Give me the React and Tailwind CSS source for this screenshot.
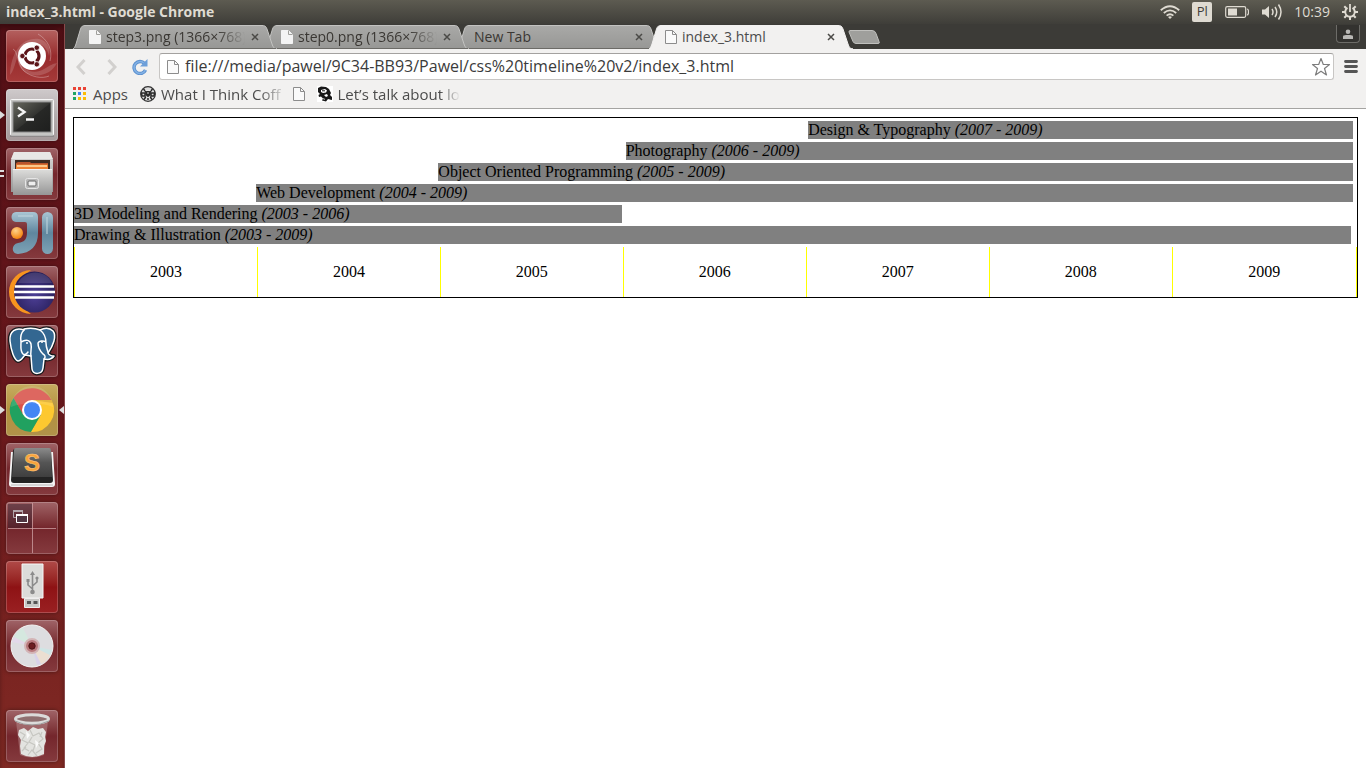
import React from "react";

const LAUNCHER = [
  { name: "Dash", tone: "red", Art: DashArt },
  { name: "Terminal", tone: "light", Art: TerminalArt, left: "arrow" },
  { name: "Files", tone: "wine", Art: FilesArt, left: "bars" },
  { name: "IntelliJ IDEA", tone: "wine", Art: IdeaArt },
  { name: "Eclipse", tone: "wine", Art: EclipseArt },
  { name: "pgAdmin", tone: "wine", Art: ElephantArt },
  { name: "Google Chrome", tone: "gold", Art: ChromeArt, left: "arrow", right: true },
  { name: "Sublime Text", tone: "wine", Art: SublimeArt },
  { name: "Workspace Switcher", tone: "wine", Art: WorkspaceArt },
  { name: "USB drive", tone: "bright", Art: UsbArt },
  { name: "Disc", tone: "wine", Art: DiscArt },
];

const TONES = {
  red: "from-[#b4605f] via-[#972b2d] to-[#a63a39]",
  light: "from-[#cfcacb] via-[#b3adae] to-[#a59a9b]",
  wine: "from-[#a06468] via-[#74262c] to-[#853a3e]",
  gold: "from-[#c6ac60] via-[#b4923f] to-[#b0924a]",
  bright: "from-[#b04a48] via-[#8e1214] to-[#9a2022]",
};

const BARS = [
  { title: "Design & Typography", span: "(2007 - 2009)", place: "ml-[57.22%] mr-1" },
  { title: "Photography", span: "(2006 - 2009)", place: "ml-[43%] mr-1" },
  { title: "Object Oriented Programming", span: "(2005 - 2009)", place: "ml-[28.4%] mr-1" },
  { title: "Web Development", span: "(2004 - 2009)", place: "ml-[14.2%] mr-1" },
  { title: "3D Modeling and Rendering", span: "(2003 - 2006)", place: "mr-[57.3%]" },
  { title: "Drawing & Illustration", span: "(2003 - 2009)", place: "mr-1.5" },
];

const YEARS = ["2003", "2004", "2005", "2006", "2007", "2008", "2009"];

function Svg({ children, className = "size-full", box = "0 0 52 52" }) {
  return (
    <svg viewBox={box} className={className} fill="none" aria-hidden="true">
      {children}
    </svg>
  );
}

function DashArt() {
  return (
    <Svg>
      <path d="M4 45C5 22 16 7 33 9c9 2 12 10 10 17C41 14 27 8 17 18 9 26 10 38 4 45z" fill="#fff" opacity=".16" />
      <path d="M51 33C45 45 30 49 19 42c-6-4-8-10-7-16 2 13 15 20 26 13 7-4 8-5 13-6z" fill="#fff" opacity=".16" />
      <path d="M7 19c5 2 4 15 11 22 7 6 18 8 25 5M32 4c10 6 15 16 12 27" stroke="#fff" opacity=".3" />
      <circle cx="26" cy="26" r="14" fill="#fff" />
      <circle cx="26" cy="26" r="7" stroke="#5c1418" strokeWidth="3.2" strokeDasharray="12.66 2" strokeDashoffset="6.33" />
      <g fill="#5c1418" stroke="#fff" strokeWidth=".8">
        <circle cx="16.4" cy="26" r="2.700" />
        <circle cx="30.8" cy="17.7" r="2.700" />
        <circle cx="30.8" cy="34.3" r="2.700" />
      </g>
    </Svg>
  );
}

function TerminalArt() {
  return (
    <Svg>
      <defs>
        <linearGradient id="term" x1="0" y1="0" x2="1" y2="1">
          <stop stopColor="#68695f" />
          <stop offset=".5" stopColor="#333431" />
          <stop offset=".52" stopColor="#272826" />
          <stop offset="1" stopColor="#1e1f1e" />
        </linearGradient>
      </defs>
      <rect x="4.5" y="10.5" width="43" height="36" rx="1" fill="#c5c5c3" stroke="#f6f6f6" />
      <path d="M4 47h44" stroke="#777" />
      <rect x="7" y="13" width="38" height="30" fill="url(#term)" stroke="#888" />
      <path d="M12 18.500l6.500 4.500-6.500 4.500M20 30.500h8" stroke="#f5f5f5" strokeWidth="2.400" />
    </Svg>
  );
}

function FilesArt() {
  return (
    <Svg>
      <defs>
        <linearGradient id="cab" x1="0" y1="0" x2="0" y2="1">
          <stop stopColor="#dededc" />
          <stop offset="1" stopColor="#969696" />
        </linearGradient>
      </defs>
      <path d="M8 4h36l3 8v32H5V12z" fill="url(#cab)" />
      <path d="M8 4h36l3 7H5z" fill="#e8e8e6" />
      <path d="M9 12h35v10H9z" fill="#3c2b22" />
      <path d="M12 14h12l1 1h17v7H10v-7z" fill="#b9542b" />
      <path d="M10 16.500h32v5H10z" fill="#ee8335" />
      <path d="M11 18h30" stroke="#ffe0a8" strokeWidth="1.4" />
      <path d="M7 21h39v26H7z" fill="url(#cab)" />
      <path d="M7 21.5h39" stroke="#f2f2f2" />
      <rect x="19.5" y="30.5" width="13" height="10" rx="2" fill="#b6b6b6" stroke="#e6e6e6" />
      <rect x="22" y="33" width="8" height="5" rx="1" fill="#eee" stroke="#666" />
    </Svg>
  );
}

function IdeaArt() {
  return (
    <Svg>
      <defs>
        <linearGradient id="steel" x1="0" y1="0" x2="0" y2="1">
          <stop stopColor="#a9c6d4" />
          <stop offset=".5" stopColor="#5f869e" />
          <stop offset="1" stopColor="#7ea3b6" />
        </linearGradient>
        <radialGradient id="ball" cx=".4" cy=".3" r=".7">
          <stop stopColor="#ffd28a" />
          <stop offset="1" stopColor="#f5830e" />
        </radialGradient>
      </defs>
      <path d="M10 5h17q5 0 5 5v16c0 13-7 20-20 21-7 0-7-10 0-11 7-1 9-4 9-11v-8q0-2-2-2h-9c-6 0-6-10 0-10z" fill="url(#steel)" />
      <rect x="36" y="5" width="11" height="42" rx="5.5" fill="url(#steel)" />
      <path d="M12 9h15M41 10v17" stroke="#c2d7df" opacity=".5" strokeWidth="2" />
      <circle cx="11" cy="26" r="6" fill="url(#ball)" />
    </Svg>
  );
}

function EclipseArt() {
  return (
    <Svg>
      <defs>
        <radialGradient id="moon" cx=".5" cy=".6" r=".6">
          <stop stopColor="#4d3f96" />
          <stop offset="1" stopColor="#251d57" />
        </radialGradient>
      </defs>
      <path d="M25 4a22 22 0 0 0 0 44A27 27 0 0 1 25 4z" fill="#f7941e" />
      <circle cx="28.5" cy="26" r="20.5" fill="url(#moon)" />
      <path d="M9 20.5h39M8 26h41M9 31.5h39" stroke="#fff" strokeWidth="2.6" />
      <path d="M12 17c6-13 27-15 34 0z" fill="#fff" opacity=".13" />
    </Svg>
  );
}

function ElephantArt() {
  const outline =
    "M18 5C10 2 3 6 4 16c1 9 4 19 8 20 3 0 5-4 7-6l6 1 1 13c1 6 10 6 11-1l1-9c4 1 8 0 10-3-4 0-5-1-6-3 5-7 9-17 5-22-4-4-9-3-13-1-5-2-11-2-16-1z";
  return (
    <Svg>
      <g strokeLinejoin="round" strokeLinecap="round">
        <path d={outline} fill="#336791" stroke="#16191c" strokeWidth="4" />
        <g stroke="#fff" strokeWidth="1.5">
          <path d={outline} fill="#336791" />
          <path d="M18 5c-3 3-4 7-3 12M34 5c4 3 6 8 6 13 0 4 1 6 2 9M15 17c5-3 9-2 10 2 1 5-1 9 0 12M15 17c0 5-1 9 2 12 1 1 3 1 5-2M40 17c-3-2-7-1-8 1 0 4 2 8 5 11 2 1 3 3 1 5" />
        </g>
      </g>
      <path d="M20 18h2M35 17h2" stroke="#fff" strokeWidth="1.5" />
    </Svg>
  );
}

function ChromeArt() {
  return (
    <Svg>
      <path d="M7.5 14A22 22 0 0 1 45.3 16H26L17.3 31z" fill="#d9524b" />
      <path d="M45.6 16A22 22 0 0 1 24.9 48L34.7 31 26 16z" fill="#fdc830" />
      <path d="M24.9 48A22 22 0 0 1 7.5 14L17.3 31 26 36l8.7-5z" fill="#21a160" />
      <path d="M26 16h19.6l1 3z" fill="#a97716" opacity=".35" />
      <circle cx="26" cy="26" r="10" fill="#fff" />
      <circle cx="26" cy="26" r="8" fill="#4486f4" />
      <path d="M5 23A21 21 0 0 1 47 23C34 18 18 18 5 23z" fill="#fff" opacity=".12" />
    </Svg>
  );
}

function SublimeArt() {
  return (
    <Svg>
      <defs>
        <linearGradient id="key" x1="0" y1="0" x2="0" y2="1">
          <stop stopColor="#8b8b8b" />
          <stop offset=".5" stopColor="#555" />
          <stop offset="1" stopColor="#3f3f3f" />
        </linearGradient>
      </defs>
      <path d="M5 9h42l2 32q0 3-3 3H6q-3 0-3-3z" fill="#f4f4f4" />
      <path d="M5 42h42" stroke="#b8b8b8" />
      <path d="M9 6h34q2 0 2 2l2 29q0 3-3 3H8q-3 0-3-3L7 8q0-2 2-2z" fill="#232323" />
      <path d="M10 5h33q2 0 2 2l1 27H6L8 7q0-2 2-2z" fill="url(#key)" />
      <text x="26" y="28" textAnchor="middle" fontFamily="Liberation Sans, sans-serif" fontWeight="700" fontSize="24" fill="#f9a23b" stroke="#ffcf86" strokeWidth=".5">S</text>
    </Svg>
  );
}

function WorkspaceArt() {
  return (
    <Svg>
      <path d="M2 2h24v24H2z" fill="#341c2b" opacity=".45" />
      <path d="M26.5 1v50M2 26.5h48" stroke="#d0a3a5" strokeWidth="1" opacity=".75" />
      <path d="M7.5 8.5h9v7h-9z" stroke="#b2a5aa" />
      <path d="M7 9h10" stroke="#b2a5aa" strokeWidth="2" />
      <path d="M10.5 12.5h11v8h-11z" fill="#503642" stroke="#fff" />
      <path d="M10 13h12" stroke="#fff" strokeWidth="2" />
    </Svg>
  );
}

function UsbArt() {
  return (
    <Svg>
      <path d="M16 3h21v34H16z" fill="#dcdcda" stroke="#f7f7f7" />
      <path d="M18.5 37.5h15v9h-15z" fill="#c9c9c7" stroke="#eee" />
      <path d="M21 40h4v3h-4zM27.5 40h4v3h-4z" fill="#555" />
      <path d="M26.5 13v18M26.5 28l-4.500-4v-4M26.5 25l4.500-4v-3" stroke="#8b8b8b" strokeWidth="1.6" />
      <path d="M26.5 10l2.500 4h-5zM20.5 18h3v3h-3z" fill="#8b8b8b" />
      <circle cx="26.5" cy="31" r="2.3" fill="#8b8b8b" />
      <circle cx="31" cy="17" r="1.6" fill="#8b8b8b" />
    </Svg>
  );
}

function DiscArt() {
  return (
    <Svg>
      <circle cx="26" cy="26" r="21" fill="#dddde0" stroke="#f3f3f3" />
      <path d="M26 26L8 17a20 20 0 0 1 9-9z" fill="#d5e8df" />
      <path d="M26 26L8 17l-2 5z" fill="#e3d9ea" />
      <path d="M26 26l18 9a20 20 0 0 1-9 9z" fill="#ecdfd2" />
      <path d="M26 26l18 9 2-5z" fill="#cfe5e5" />
      <path d="M26 26l5 19 4-1z" fill="#d9d2ea" />
      <circle cx="26" cy="26" r="7" fill="#b9787c" stroke="#d3b4b6" strokeWidth="2" />
      <circle cx="26" cy="26" r="3.2" fill="#6d1d20" stroke="#4c1416" />
    </Svg>
  );
}

function TrashArt() {
  return (
    <Svg>
      <path d="M10 11l4 34q12 5 24 0l4-34z" fill="#c29a9b" opacity=".45" />
      <path d="M13 20l5-2 4 3 5-4 5 2 5-1 3 4-1 5 1 4-2 5v8q-12 6-23 0l-1-8 1-6-3-5z" fill="#e3e3e0" />
      <path d="M14 22l5 3-3 5 6 3-4 5 5 3M24 20l3 6 6-3 4 6-5 4 4 6-6 4M26 27l-3 5 6 3-2 6M36 22l-2 5M16 41l4-4M22 45l4-5 5 6" stroke="#c6c6c1" strokeWidth="1.2" />
      <path d="M20 21l4 4-3 4zM29 30l4 3-3 5z" fill="#fafafa" />
      <ellipse cx="26" cy="9" rx="16.5" ry="4.2" fill="#8f6f70" stroke="#dbdbda" strokeWidth="3" />
      <path d="M9 11q17 8 34 0" stroke="#9c9c9c" />
    </Svg>
  );
}

function LauncherTile({ name, tone, Art, left, right }) {
  return (
    <li className="relative flex px-1.5">
      <button
        type="button"
        aria-label={name}
        className={`size-[52px] overflow-hidden rounded-[4px] bg-linear-to-b shadow-[inset_0_0_0_1px_rgba(255,255,255,0.2),0_0_4px_rgba(0,0,0,0.4)] ${TONES[tone]}`}
      >
        <Art />
      </button>
      {left === "arrow" && (
        <Svg box="0 0 5 8" className="absolute top-[22px] left-0 h-2 w-[5px]">
          <path d="M0 0l5 4-5 4z" fill="#ddd" />
        </Svg>
      )}
      {left === "bars" && (
        <Svg box="0 0 5 8" className="absolute top-[22px] left-0 h-2 w-[5px]">
          <path d="M0 0h4v2H0zM0 5h4v2H0z" fill="#ddd" />
        </Svg>
      )}
      {right && (
        <Svg box="0 0 5 8" className="absolute top-[22px] right-0 h-2 w-[5px]">
          <path d="M5 0L0 4l5 4z" fill="#ddd" />
        </Svg>
      )}
    </li>
  );
}

function PageIcon({ solid = false }) {
  return (
    <Svg box="0 0 12 14" className="h-3.5 w-3 shrink-0">
      <path
        d="M.5.5h7l4 4v9H.5z"
        fill={solid ? "#f4f4f4" : "#fafafa"}
        stroke={solid ? "#f4f4f4" : "#8c8c8c"}
      />
      <path d="M7.5.5v4h4" stroke={solid ? "#a0a09c" : "#8c8c8c"} />
    </Svg>
  );
}

function Tab({ label, icon = true, active = false, fade = false, layer }) {
  return (
    <li className={`relative -mr-3 flex h-6 w-[204px] min-w-0 items-center pr-[18px] ${icon ? "pl-4" : "pl-[17px]"} ${layer}`}>
      <svg viewBox="0 0 204 24" preserveAspectRatio="none" className="absolute inset-0 size-full" aria-hidden="true">
        <defs>
          <linearGradient id="idle" x1="0" y1="0" x2="0" y2="1">
            <stop stopColor="#a9a9a7" />
            <stop offset="1" stopColor="#979795" />
          </linearGradient>
        </defs>
        <path
          d="M-1 24C1 24 2 22 3 19L7.500 4C8.500 1 10 .5 12 .5H189C191.500 .5 193 1 194 4L199 19C200 22 201 24 204 24z"
          fill={active ? "#f2f1f0" : "url(#idle)"}
          stroke={active ? "#f2f1f0" : "#c3c3c1"}
          strokeWidth="1"
        />
        {!active && <path d="M1 23.5H203" stroke="#6c6b67" />}
      </svg>
      <button
        type="button"
        className={`relative flex min-w-0 flex-1 items-center gap-[5px] text-left text-[14px] leading-5 whitespace-nowrap ${active ? "text-[#4c4c4c]" : "text-[#3a3733]"}`}
      >
        {icon && <PageIcon solid={!active} />}
        <span
          className={`flex-1 overflow-hidden ${fade ? "[mask-image:linear-gradient(to_right,#000_80%,transparent)]" : ""}`}
        >
          {label}
        </span>
      </button>
      <button type="button" aria-label={`Close ${label}`} className="relative ml-1.5 size-2 shrink-0">
        <Svg box="0 0 8 8">
          <path d="M1 1l6 6M7 1L1 7" stroke="#4b4a47" strokeWidth="1.5" />
        </Svg>
      </button>
    </li>
  );
}

function TopPanel() {
  return (
    <header className="flex h-6 shrink-0 items-center bg-linear-to-b from-[#5d5b51] to-[#3f3e39] pr-2 pl-1.5 text-[#dfdbd2]">
      <h1 className="flex-1 text-[14px] leading-6 font-bold">index_3.html - Google Chrome</h1>
      <div className="flex items-center gap-3">
        <Svg box="0 0 20 14" className="h-3.5 w-5">
          <g stroke="#dfdbd2" strokeWidth="1.8">
            <path d="M.8 5.200q9.200-8 18.400 0M3.800 8q6.200-5.200 12.400 0M6.600 10.600q3.400-2.800 6.800 0" />
          </g>
          <path d="M8 12q2-1.500 4 0l-2 2z" fill="#dfdbd2" />
        </Svg>
        <span className="flex size-5 items-center justify-center rounded-[2px] bg-[#dfdbd2] text-[13px] text-[#3f3e39]">Pl</span>
        <Svg box="0 0 24 12" className="mx-px h-3 w-6">
          <rect x=".7" y=".7" width="20" height="10.6" rx="1.5" stroke="#dfdbd2" strokeWidth="1.2" />
          <path d="M3 2.500h9v7H3z" fill="#dfdbd2" />
          <path d="M22 3q1.500 0 1.500 3T22 9" stroke="#dfdbd2" strokeWidth="1.2" />
        </Svg>
        <Svg box="0 0 20 18" className="h-[18px] w-5">
          <path d="M0 6.500h3l4-3.500v12l-4-3.500H0z" fill="#dfdbd2" />
          <path d="M10 6q2 3 0 6M13 4q3.500 5 0 10M16.500 1.500q5 7.500 0 15" stroke="#dfdbd2" strokeWidth="1.5" />
        </Svg>
        <time className="text-[14px] leading-6">10:39</time>
        <Svg box="0 0 16 16" className="size-4">
          <path d="M5.500 3.900a4.800 4.800 0 1 0 5 0" stroke="#dfdbd2" strokeWidth="2" />
          <path d="M8 0v8" stroke="#dfdbd2" strokeWidth="1.8" />
          <path d="M8 13v3M0 8h3M13 8h3M2.300 13.700l2-2M13.700 13.700l-2-2M2.300 2.300l2 2M13.700 2.300l-2 2" stroke="#dfdbd2" strokeWidth="2" />
        </Svg>
      </div>
    </header>
  );
}

function Bookmarks() {
  const squares = [
    "#ea4335", "#ea4335", "#ea4335",
    "#1fa463", "#4285f4", "#fbbc05",
    "#1fa463", "#fbbc05", "#fbbc05",
  ];
  return (
    <nav aria-label="Bookmarks" className="flex h-7 items-center gap-3 pb-px pl-2 text-[15px] leading-5 whitespace-nowrap text-[#4c4c4c]">
      <a href="#apps" className="flex items-center gap-1.5">
        <Svg box="0 0 14 14" className="size-3.5">
          {squares.map((fill, i) => (
            <rect key={i} x={(i % 3) * 5} y={Math.floor(i / 3) * 5} width="3" height="3" fill={fill} />
          ))}
        </Svg>
        Apps
      </a>
      <a href="#coffee" className="flex items-center gap-[5px]">
        <Svg box="0 0 16 16" className="size-4">
          <circle cx="8" cy="8" r="7.3" fill="#ddd" stroke="#333" strokeWidth="1.3" />
          <path d="M3.500 3l2.500 3M12.500 3L10 6M1.500 7h3.500v3H2zM14.500 7H11v3h3zM4 13.500l2-3M12 13.500l-2-3M8 10v4" stroke="#2a2a2a" strokeWidth="1.5" />
          <circle cx="8" cy="7.5" r="2.8" fill="#2a2a2a" />
          <path d="M5.500 4.500h5M7 7h2M6.500 11.500h3" stroke="#eee" strokeWidth=".9" />
        </Svg>
        <span className="[mask-image:linear-gradient(to_right,#000_82%,transparent_105%)]">What I Think Coff</span>
      </a>
      <a href="#page" aria-label="Untitled bookmark">
        <PageIcon />
      </a>
      <a href="#talk" className="flex items-center gap-[5px]">
        <Svg box="0 0 16 16" className="size-4">
          <path d="M0 0h16v16H0z" fill="#fff" />
          <path d="M1 2l3-1.500 5 .5 3 2 2 4-1 2 2 2v3l-4-1-2 2.500-4-1 1-2-2-2-2 .5-.5-2L3 8 1 6z" fill="#171717" />
          <path d="M4 4l4-1 2 1.500-1 2-3 .5-2-1zM7 9l3-1 1 2-2 1zM6 12l2 1-1 1z" fill="#fff" />
          <path d="M5 4.800h3M11 5l1 4M12 12l2 1" stroke="#171717" />
        </Svg>
        <span className="[mask-image:linear-gradient(to_right,#000_84%,transparent_100%)]">Let’s talk about lo</span>
      </a>
    </nav>
  );
}

function Browser() {
  return (
    <section className="flex min-w-0 flex-1 flex-col bg-white">
      <div className="flex h-[25px] items-end bg-[#3c3b37] pl-2">
        <ul className="flex">
          <Tab label="step3.png (1366×768)" fade layer="z-30" />
          <Tab label="step0.png (1366×768)" fade layer="z-20" />
          <Tab label="New Tab" icon={false} layer="z-10" />
          <Tab label="index_3.html" active layer="z-40" />
        </ul>
        <button type="button" aria-label="New tab" className="mb-1 ml-[7px] h-4 w-8">
          <Svg box="0 0 32 16">
            <path d="M2 1.500h22q3 0 4 3l3 8q1 2-1 2H8q-2 0-3-2L1 3q0-1.500 1-1.500z" fill="#9f9f9c" stroke="#c0c0bd" />
          </Svg>
        </button>
        <button
          type="button"
          aria-label="Profile"
          className="mr-1.5 mb-1.5 ml-auto flex h-[18px] w-6 items-center justify-center rounded-b-[4px] border border-t-0 border-[#6d6c68] bg-[#33322f]"
        >
          <Svg box="0 0 10 10" className="size-2.5">
            <circle cx="5" cy="2.8" r="2.3" fill="#b9b8b5" />
            <path d="M0 10V7.500q0-1.500 3-1.500h4q3 0 3 1.500V10z" fill="#b9b8b5" />
          </Svg>
        </button>
      </div>

      <div className="border-b border-[#a5a4a2] bg-[#f2f1f0]">
        <div className="flex items-center pt-1 pr-2">
          <button type="button" aria-label="Back" disabled className="ml-[11px] h-4 w-2.5">
            <Svg box="0 0 10 16">
              <path d="M8.500 1L2 8l6.500 7" stroke="#d2d0ce" strokeWidth="3" />
            </Svg>
          </button>
          <button type="button" aria-label="Forward" disabled className="ml-[21px] h-4 w-2.5">
            <Svg box="0 0 10 16">
              <path d="M1.500 1L8 8l-6.500 7" stroke="#d2d0ce" strokeWidth="3" />
            </Svg>
          </button>
          <button type="button" aria-label="Reload" className="ml-[15px] size-4">
            <Svg box="0 0 16 16">
              <path d="M12.500 4.500A6 6 0 1 0 13.500 11" stroke="#5b8fce" strokeWidth="3.4" />
              <path d="M12.500 4.500A6 6 0 1 0 13.500 11" stroke="#82b1e4" strokeWidth="1.6" />
              <path d="M15.500 0v7.500H8z" fill="#6d9fd9" />
            </Svg>
          </button>
          <div className="ml-[11px] flex h-[27px] flex-1 items-center gap-1.5 rounded-[3px] border border-[#c8c6c4] border-t-[#a3a19f] bg-white pr-0.5 pl-[7px]">
            <PageIcon />
            <input
              type="text"
              aria-label="Address"
              defaultValue="file:///media/pawel/9C34-BB93/Pawel/css%20timeline%20v2/index_3.html"
              className="min-w-0 flex-1 bg-transparent pb-0.5 text-[16px] leading-6 text-[#3b3b3b] outline-none"
            />
            <button type="button" aria-label="Bookmark this page" className="size-5">
              <Svg box="0 0 20 20">
                <path d="M10 1.500l2.300 6h6.200l-5 4 2 6.500L10 14.200 4.500 18l2-6.500-5-4h6.200z" stroke="#7d7d7d" strokeWidth="1.2" strokeLinejoin="round" />
              </Svg>
            </button>
          </div>
          <button type="button" aria-label="Menu" className="ml-2.5 h-[13px] w-3.5">
            <Svg box="0 0 14 13">
              <path d="M1.500 1.500h11M1.500 6.500h11M1.500 11.500h11" stroke="#555" strokeWidth="2.8" strokeLinecap="round" />
            </Svg>
          </button>
        </div>
        <Bookmarks />
      </div>

      <main className="flex-1 p-2 font-['Liberation_Serif',serif] text-[16px] leading-[18px] text-black">
        <div className="border border-black pt-[3px]">
          <ul className="flex flex-col gap-[3px] pb-[3px]">
            {BARS.map((bar) => (
              <li key={bar.title} className={`bg-[#808080] whitespace-nowrap ${bar.place}`}>
                {bar.title} <em>{bar.span}</em>
              </li>
            ))}
          </ul>
          <ol className="flex border-r border-[#ffff00] text-center leading-[50px]">
            {YEARS.map((year) => (
              <li key={year} className="w-[14.27%] border-l border-[#ffff00] last:flex-1">{year}</li>
            ))}
          </ol>
        </div>
      </main>
    </section>
  );
}

export default function App() {
  return (
    <div className="flex min-h-screen flex-col font-['Open_Sans',sans-serif]">
      <TopPanel />
      <div className="flex flex-1">
        <nav
          aria-label="Launcher"
          className="flex w-[65px] shrink-0 flex-col justify-between border-r border-[#8a4a4c] bg-linear-to-b from-[#551016] via-[#6b181d] to-[#802923] pt-1.5 pb-1.5 shadow-[inset_0_4px_4px_rgba(0,0,0,0.3)]"
        >
          <ul className="flex flex-col gap-[7px]">
            {LAUNCHER.map((item) => (
              <LauncherTile key={item.name} {...item} />
            ))}
          </ul>
          <ul>
            <LauncherTile name="Trash" tone="wine" Art={TrashArt} />
          </ul>
        </nav>
        <Browser />
      </div>
    </div>
  );
}
